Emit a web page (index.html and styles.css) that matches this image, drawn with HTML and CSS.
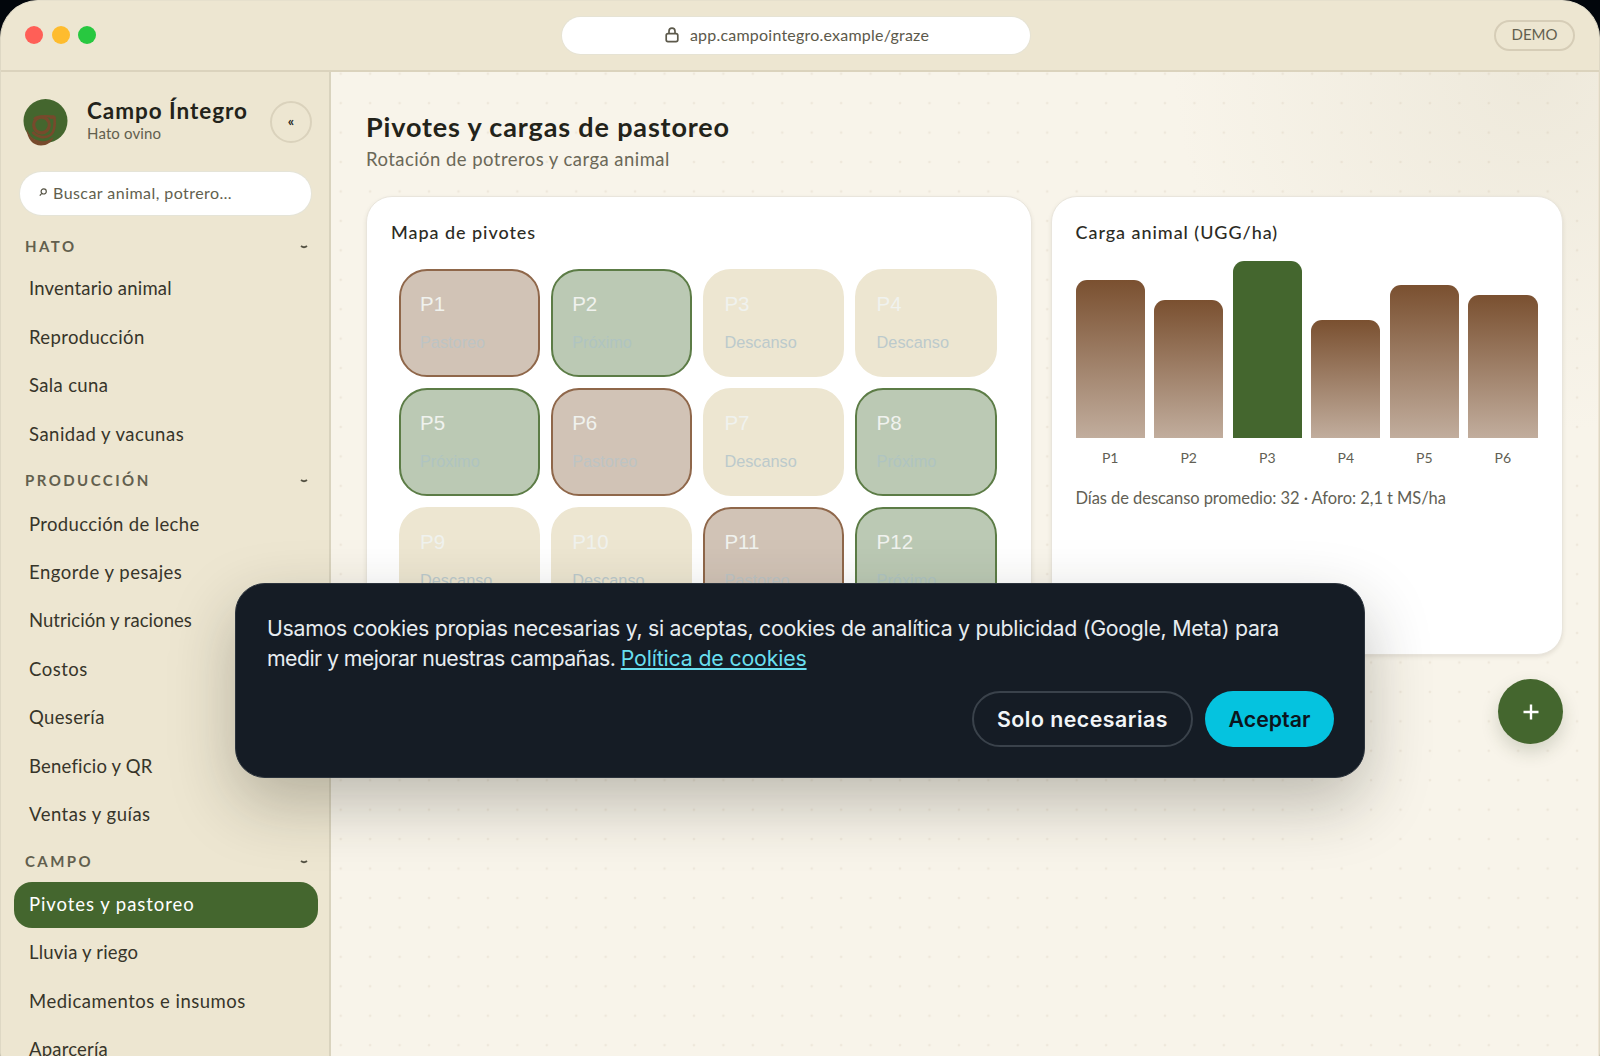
FILE: index.html
```
<!DOCTYPE html>
<html lang="es">
<head>
<meta charset="utf-8">
<title>Campo Íntegro</title>
<link rel="stylesheet" href="styles.css">
</head>
<body>
<div class="window">
  <header class="topbar">
    <div class="lights"><i class="red"></i><i class="yellow"></i><i class="green"></i></div>
    <div class="url">
      <svg class="lock" viewBox="0 0 14 16"><rect x="1.2" y="6.6" width="11.6" height="8" rx="1.8"/><path d="M4 6.4V4.2a3 3 0 0 1 6 0v2.2"/></svg>
      <span>app.campointegro.example/graze</span>
    </div>
    <span class="demo">DEMO</span>
  </header>
  <div class="body">
    <aside class="sidebar">
      <div class="brand">
        <svg class="logo" viewBox="0 0 46 48"><circle cx="22.500" cy="22" r="22" fill="#44662e"/><path d="M3.500 29.500C4 40 10 46.500 18 46.500c6 0 10.500-3 12.500-8.500-5 4-10 5-15 3.500C9 40 6 36 3.500 29.500z" fill="#774a2c"/><g fill="none" stroke="#774a2c"><circle cx="18.500" cy="26" r="7.800" stroke-width="3.200"/><path d="M11 20c3-3.500 11-2.800 20.500-2.500" stroke-width="2.500"/><path d="M27 18.500q4 .5 4.500-1c.5 6 1 15-4 18.500-6 4-14 2-18-3" stroke-width="2.600"/></g></svg>
        <div class="names"><strong>Campo Íntegro</strong><span>Hato ovino</span></div>
        <span class="collapse">«</span>
      </div>
      <div class="search"><svg viewBox="0 0 8 9"><circle cx="4.700" cy="3.400" r="2.600"/><path d="M2.800 5.300.8 7.700"/></svg><span>Buscar animal, potrero…</span></div>
      <nav>
        <h6>HATO <svg viewBox="0 0 8 4"><path d="M1 1q3 2.400 6 0"/></svg></h6>
        <a class="tight">Inventario animal</a><a>Reproducción</a><a>Sala cuna</a><a class="wide">Sanidad y vacunas</a>
        <h6>PRODUCCIÓN <svg viewBox="0 0 8 4"><path d="M1 1q3 2.400 6 0"/></svg></h6>
        <a>Producción de leche</a><a class="wide">Engorde y pesajes</a><a class="narrow">Nutrición y raciones</a><a class="wide">Costos</a><a>Quesería</a><a class="tight">Beneficio y QR</a><a class="wide">Ventas y guías</a>
        <h6>CAMPO <svg viewBox="0 0 8 4"><path d="M1 1q3 2.400 6 0"/></svg></h6>
        <a class="active">Pivotes y pastoreo</a><a class="tight">Lluvia y riego</a><a class="wide">Medicamentos e insumos</a><a class="tight">Aparcería</a>
      </nav>
    </aside>
    <main>
      <h1>Pivotes y cargas de pastoreo</h1>
      <p class="sub">Rotación de potreros y carga animal</p>
      <div class="cards">
        <section class="card">
          <h2>Mapa de pivotes</h2>
          <div class="tiles">
            <div class="tile graze"><b>P1</b><span>Pastoreo</span></div>
            <div class="tile next"><b>P2</b><span>Próximo</span></div>
            <div class="tile"><b>P3</b><span>Descanso</span></div>
            <div class="tile"><b>P4</b><span>Descanso</span></div>
            <div class="tile next"><b>P5</b><span>Próximo</span></div>
            <div class="tile graze"><b>P6</b><span>Pastoreo</span></div>
            <div class="tile"><b>P7</b><span>Descanso</span></div>
            <div class="tile next"><b>P8</b><span>Próximo</span></div>
            <div class="tile"><b>P9</b><span>Descanso</span></div>
            <div class="tile"><b>P10</b><span>Descanso</span></div>
            <div class="tile graze"><b>P11</b><span>Pastoreo</span></div>
            <div class="tile next"><b>P12</b><span>Próximo</span></div>
          </div>
        </section>
        <section class="card">
          <h2>Carga animal (UGG/ha)</h2>
          <div class="bars">
            <div><i style="height:158px"></i><span>P1</span></div>
            <div><i style="height:138px"></i><span>P2</span></div>
            <div><i class="top" style="height:177px"></i><span>P3</span></div>
            <div><i style="height:118px"></i><span>P4</span></div>
            <div><i style="height:153px"></i><span>P5</span></div>
            <div><i style="height:143px"></i><span>P6</span></div>
          </div>
          <p class="note">Días de descanso promedio: 32 · Aforo: 2,1 t MS/ha</p>
        </section>
      </div>
      <div class="fab"><svg viewBox="0 0 16 16"><path d="M8 .5v15M.5 8h15"/></svg></div>
    </main>
  </div>
</div>
<div class="cookies">
  <p><span class="l1">Usamos cookies propias necesarias y, si aceptas, cookies de analítica y publicidad (Google, Meta) para</span><br><span class="l2">medir y mejorar nuestras campañas. <a>Política de cookies</a></span></p>
  <div class="actions"><button class="ghost">Solo necesarias</button><button class="accept">Aceptar</button></div>
</div>
</body>
</html>
```
FILE: styles.css
```
* { box-sizing: border-box; }
body { margin: 0; width: 1600px; height: 1056px; overflow: hidden; background: #02060c; font-family: Lato, "Noto Sans", sans-serif; color: #23231a; }
.window { height: 1090px; border: 1px solid #ded8c4; border-top-color: #e6e0cd; border-radius: 38px; overflow: hidden; background: #ede6d1; display: flex; flex-direction: column; }
.topbar { height: 71px; flex: none; border-bottom: 2px solid #dbd3bd; display: grid; grid-template-columns: 1fr 468px 1fr; align-items: center; padding: 0 24px 0; }
.lights { display: flex; gap: 8.500px; margin-bottom: 1px; }
.lights i { width: 18px; height: 18px; border-radius: 50%; }
.red { background: #ff5f57; }
.yellow { background: #febc2e; }
.green { background: #28c840; }
.url { height: 37px; margin-left: -4px; margin-right: 4px; border-radius: 19px; background: #fff; display: flex; align-items: center; justify-content: center; gap: 11px; padding: 0 0 3px 2px; font-size: 16px; color: #5c594b; letter-spacing: .22px; box-shadow: 0 0 0 1px #e6e3d4; }
.lock { width: 14px; height: 16px; margin-top: 2px; fill: none; stroke: #5c594b; stroke-width: 1.700; }
.demo { justify-self: end; width: 81px; height: 31px; border: 2px solid #d6cdb7; border-radius: 16px; font-size: 15px; line-height: 25px; text-align: center; color: #625f4e; }
.body { flex: 1; display: flex; min-height: 0; }
.sidebar { width: 330px; flex: none; border-right: 2px solid #d9d3be; padding: 27px 12px 0 13px; }
.brand { display: flex; height: 47px; padding-left: 9px; }
.logo { width: 46px; height: 48px; flex: none; }
.names { margin: 0 0 0 18px; width: 183px; display: flex; flex-direction: column; }
.names strong { font-size: 22.500px; line-height: 24px; letter-spacing: .95px; white-space: nowrap; }
.names span { font-size: 15px; line-height: 20px; color: #625f4e; letter-spacing: .15px; }
.collapse { width: 42px; height: 42px; margin-top: 2px; flex: none; border: 2px solid #dad2bc; border-radius: 50%; text-align: center; font-size: 14px; line-height: 35px; font-weight: 700; }
.search { margin: 26px 6px 0; height: 43px; border-radius: 22px; background: #fff; box-shadow: 0 0 0 1px #e5e4d8; display: flex; align-items: center; gap: 6px; padding: 0 0 2px 19px; font-size: 16px; color: #625f4e; letter-spacing: .45px; }
.search svg { width: 8px; height: 9px; fill: none; stroke: #555344; stroke-width: 1.200; }
nav { display: flex; flex-direction: column; }
nav h6 { margin: 0; height: 41.600px; padding: 0 9px 1px 11px; display: flex; align-items: center; justify-content: space-between; font-size: 15px; letter-spacing: 2.450px; color: #625f4e; }
nav h6:first-child { height: 51.400px; padding-top: 11px; }
nav h6 svg { width: 8px; height: 4px; margin-top: 2px; fill: none; stroke: #555344; stroke-width: 1.800; }
nav a { height: 45.800px; margin-bottom: 2.600px; flex: none; line-height: 45px; padding-left: 15px; font-size: 18.500px; letter-spacing: .35px; color: #37352a; border-radius: 18px; width: 304px; }
nav a.tight { letter-spacing: .2px; }
nav a.narrow { letter-spacing: .05px; }
nav a.wide { letter-spacing: .5px; }
nav a.active { background: #44662e; color: #fff; letter-spacing: .93px; }
main { flex: 1; padding: 35px 35px 0 35px; border-right: 1px solid #eee5d5; background: radial-gradient(circle, rgba(125,85,45,.08) 0 1px, transparent 1.700px) -5px -13px / 29.440px 29.440px, radial-gradient(circle at 95% 0, #eee9db 0, rgba(247,243,233,0) 360px), #f8f4ea; }
h1 { margin: 0; font-size: 27px; line-height: 39px; letter-spacing: .85px; }
.sub { margin: 0; font-size: 18.500px; line-height: 27px; letter-spacing: .45px; color: #6b6858; }
.cards { margin-top: 22.500px; display: grid; grid-template-columns: 666px 512px; gap: 18.500px; height: 459.500px; }
.card { background: #fff; border: 1px solid #e9e5dc; border-radius: 26px; box-shadow: 0 2px 4px rgba(60,50,30,.1); padding: 23px 24px; }
h2 { margin: 0; font-size: 18px; line-height: 24px; font-weight: 500; letter-spacing: .95px; color: #2c2b24; }
.tiles { margin: 25px 0 0 7.500px; display: grid; grid-template-columns: repeat(4, 141.500px); gap: 10.700px; font-family: "Liberation Sans", Arial, sans-serif; }
.tile { height: 108.500px; border: 2px solid #ede6d1; border-radius: 28px; background: #ede6d1; padding: 21px 19.500px; display: flex; flex-direction: column; }
.tile b { font-weight: 400; font-size: 20.500px; line-height: 24px; color: #f0f2ee; }
.tile span { margin-top: 17px; font-size: 16.300px; line-height: 18px; color: #bccacc; }
.graze { background: #d1c3b6; border-color: #8f674a; }
.next { background: #bbc9b4; border-color: #5c7c46; }
.graze span { color: #bdc4c4; }
.next span { color: #afc4c1; }
.bars { display: flex; gap: 9.200px; margin-top: 17.500px; height: 206px; }
.bars div { flex: 1; display: flex; flex-direction: column; justify-content: flex-end; }
.bars i { display: block; border-radius: 11px 11px 0 0; background: linear-gradient(#7a5030, #c1ad9d); }
.bars i.top { background: #44662e; }
.bars span { height: 29px; padding-top: 10px; line-height: 19px; font-size: 14px; text-align: center; color: #625f54; }
.note { margin: 20px 0 0; font-size: 16.500px; line-height: 22px; color: #625f54; letter-spacing: -.06px; white-space: nowrap; }
.fab { width: 65px; height: 65px; margin: 24px 0 0 auto; border-radius: 50%; background: #44662e; box-shadow: 0 8px 18px rgba(45,60,30,.18); display: grid; place-items: center; }
.fab svg { width: 16px; height: 16px; fill: none; stroke: #fff; stroke-width: 2.400; }
.cookies { position: absolute; left: 235px; top: 583px; width: 1130px; height: 195px; border: 1px solid #2b333c; border-radius: 30px; background: #151c25; box-shadow: 0 25px 65px rgba(35,35,25,.28); padding: 30px 30px 30px 31px; font-family: Inter, sans-serif; color: #e7ecf0; }
.cookies p { margin: 0; font-size: 21.300px; line-height: 29.500px; white-space: nowrap; }
.l1 { letter-spacing: -.28px; }
.l2 { letter-spacing: -.56px; }
.cookies a { letter-spacing: -.15px; color: #69dfef; text-decoration: underline; text-underline-offset: 2px; text-decoration-thickness: 2px; }
.actions { display: flex; justify-content: flex-end; gap: 12px; margin-top: 18px; }
.actions button { height: 56px; border-radius: 28px; font: 600 21.300px Inter, sans-serif; padding: 0; white-space: nowrap; }
.actions .ghost { width: 221px; border: 2px solid #3a424b; background: none; color: #f2f5f7; letter-spacing: .5px; }
.actions .accept { width: 129px; border: 0; background: #05c3df; color: #0b151d; }
```
